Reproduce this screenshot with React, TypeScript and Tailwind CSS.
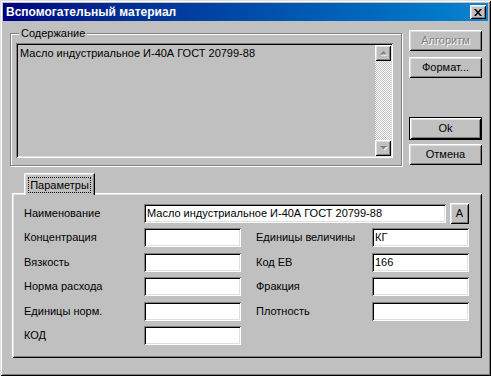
import React from 'react';

// win98-like bevels
const raised =
  'shadow-[inset_1px_1px_#ffffff,inset_-1px_-1px_#000000,inset_2px_2px_#dfdfdf,inset_-2px_-2px_#808080]';
const sunken =
  'shadow-[inset_1px_1px_#808080,inset_-1px_-1px_#ffffff,inset_2px_2px_#000000,inset_-2px_-2px_#dfdfdf]';

const Button: React.FC<{ label: string; disabled?: boolean; isDefault?: boolean; className?: string }> = ({
  label,
  disabled,
  isDefault,
  className = '',
}) => (
  <div
    className={`flex w-[73px] items-center justify-center bg-[#c0c0c0] text-[11px] ${raised} ${
      isDefault ? 'h-[23px] border border-black' : 'h-[21px]'
    } ${disabled ? 'text-[#808080] [text-shadow:1px_1px_#ffffff]' : 'text-black'} ${className}`}
  >
    {label}
  </div>
);

const Field: React.FC<{ value?: string; className?: string }> = ({ value = '', className = 'w-[97px]' }) => (
  <div className={`h-[19px] bg-white px-[3px] text-[11px] leading-[19px] text-black ${sunken} ${className}`}>
    {value}
  </div>
);

const ArrowBtn: React.FC<{ up?: boolean }> = ({ up }) => (
  <div className={`flex h-[16px] w-[16px] items-center justify-center bg-[#c0c0c0] ${raised}`}>
    <svg width="9" height="6" viewBox="0 0 9 6">
      {up ? (
        <>
          <path d="M4.5 1 L8 4.5 L1 4.5 Z" fill="#ffffff" transform="translate(1 1)" />
          <path d="M4.5 1 L8 4.5 L1 4.5 Z" fill="#808080" />
        </>
      ) : (
        <>
          <path d="M1 1 L8 1 L4.5 4.5 Z" fill="#ffffff" transform="translate(1 1)" />
          <path d="M1 1 L8 1 L4.5 4.5 Z" fill="#808080" />
        </>
      )}
    </svg>
  </div>
);

const rows: { left: string; right?: string; rightValue?: string }[] = [
  { left: 'Концентрация', right: 'Единицы величины', rightValue: 'КГ' },
  { left: 'Вязкость', right: 'Код ЕВ', rightValue: '166' },
  { left: 'Норма расхода', right: 'Фракция', rightValue: '' },
  { left: 'Единицы норм.', right: 'Плотность', rightValue: '' },
  { left: 'КОД' },
];

const App: React.FC = () => {
  return (
    <div
      className={`flex h-[376px] w-[491px] flex-col bg-[#c0c0c0] p-[3px] font-['Liberation_Sans',Arial,sans-serif] text-[11px] text-black shadow-[inset_1px_1px_#dfdfdf,inset_-1px_-1px_#000000,inset_2px_2px_#ffffff,inset_-2px_-2px_#808080]`}
    >
      {/* Title bar */}
      <div className="flex h-[18px] items-center justify-between bg-linear-to-r from-[#000080] to-[#1084d0] pl-[3px] pr-[2px]">
        <span className="text-[12px] font-bold leading-none text-white">Вспомогательный материал</span>
        <div className={`flex h-[14px] w-[16px] items-center justify-center bg-[#c0c0c0] ${raised}`}>
          <svg width="8" height="7" viewBox="0 0 8 7">
            <path d="M0 0h2l2 2.5L6 0h2L5 3.5 8 7H6L4 4.5 2 7H0l3-3.5z" fill="#000" />
          </svg>
        </div>
      </div>

      {/* Content + buttons */}
      <div className="mt-[9px] flex items-start pl-[7px]">
        <div className="relative mt-[3px] h-[133px] w-[392px] border border-[#808080] pb-[7px] pl-[5px] pr-[8px] pt-[9px] shadow-[inset_1px_1px_#ffffff,1px_1px_#ffffff]">
          <span className="absolute -top-[7px] left-[8px] bg-[#c0c0c0] px-[2px] leading-[13px]">Содержание</span>
          <div className={`flex h-[115px] w-[377px] bg-[#c0c0c0] p-[2px] ${sunken}`}>
            <div className="flex-1 pl-[2px] pt-[2px] leading-[13px]">Масло индустриальное И-40А ГОСТ 20799-88</div>
            <div className="flex w-[16px] flex-col">
              <ArrowBtn up />
              <div className="flex-1 bg-[repeating-conic-gradient(#ffffff_0%_25%,#c0c0c0_0%_50%)] bg-size-[2px_2px]" />
              <ArrowBtn />
            </div>
          </div>
        </div>
        <div className="ml-[7px] flex flex-col">
          <Button label="Алгоритм" disabled />
          <Button label="Формат..." className="mt-[6px]" />
          <Button label="Ok" isDefault className="mt-[39px]" />
          <Button label="Отмена" className="mt-[4px]" />
        </div>
      </div>

      {/* Tabs */}
      <div className="mt-[7px] flex flex-col pl-[9px]">
        <div className="relative z-10 -mb-[2px] ml-[12px] h-[22px] w-[71px] rounded-tl-[2px] border-l border-t border-white border-r border-r-black bg-[#c0c0c0] pl-[3px] pt-[3px] shadow-[inset_-1px_0_#808080,inset_1px_1px_#dfdfdf]">
          <div className="flex h-[16px] w-[63px] items-center justify-center border border-dotted border-black leading-none">
            Параметры
          </div>
        </div>
        <div className={`h-[165px] w-[470px] pl-[12px] pt-[10px] ${raised}`}>
          <div className="flex h-[21px] items-center">
            <span className="w-[120px]">Наименование</span>
            <Field value="Масло индустриальное И-40А ГОСТ 20799-88" className="w-[302px] px-[2px]" />
            <div className={`ml-[4px] flex h-[21px] w-[19px] items-center justify-center bg-[#c0c0c0] ${raised}`}>A</div>
          </div>
          <div className="mt-[4px] grid grid-cols-[120px_97px_15px_116px_97px] gap-y-[5.5px]">
            {rows.map((r) => (
              <React.Fragment key={r.left}>
                <span className="flex h-[19px] items-center">{r.left}</span>
                <Field />
                <span />
                <span className="flex h-[19px] items-center">{r.right ?? ''}</span>
                {r.right ? <Field value={r.rightValue} /> : <span />}
              </React.Fragment>
            ))}
          </div>
        </div>
      </div>
    </div>
  );
};

export default App;
